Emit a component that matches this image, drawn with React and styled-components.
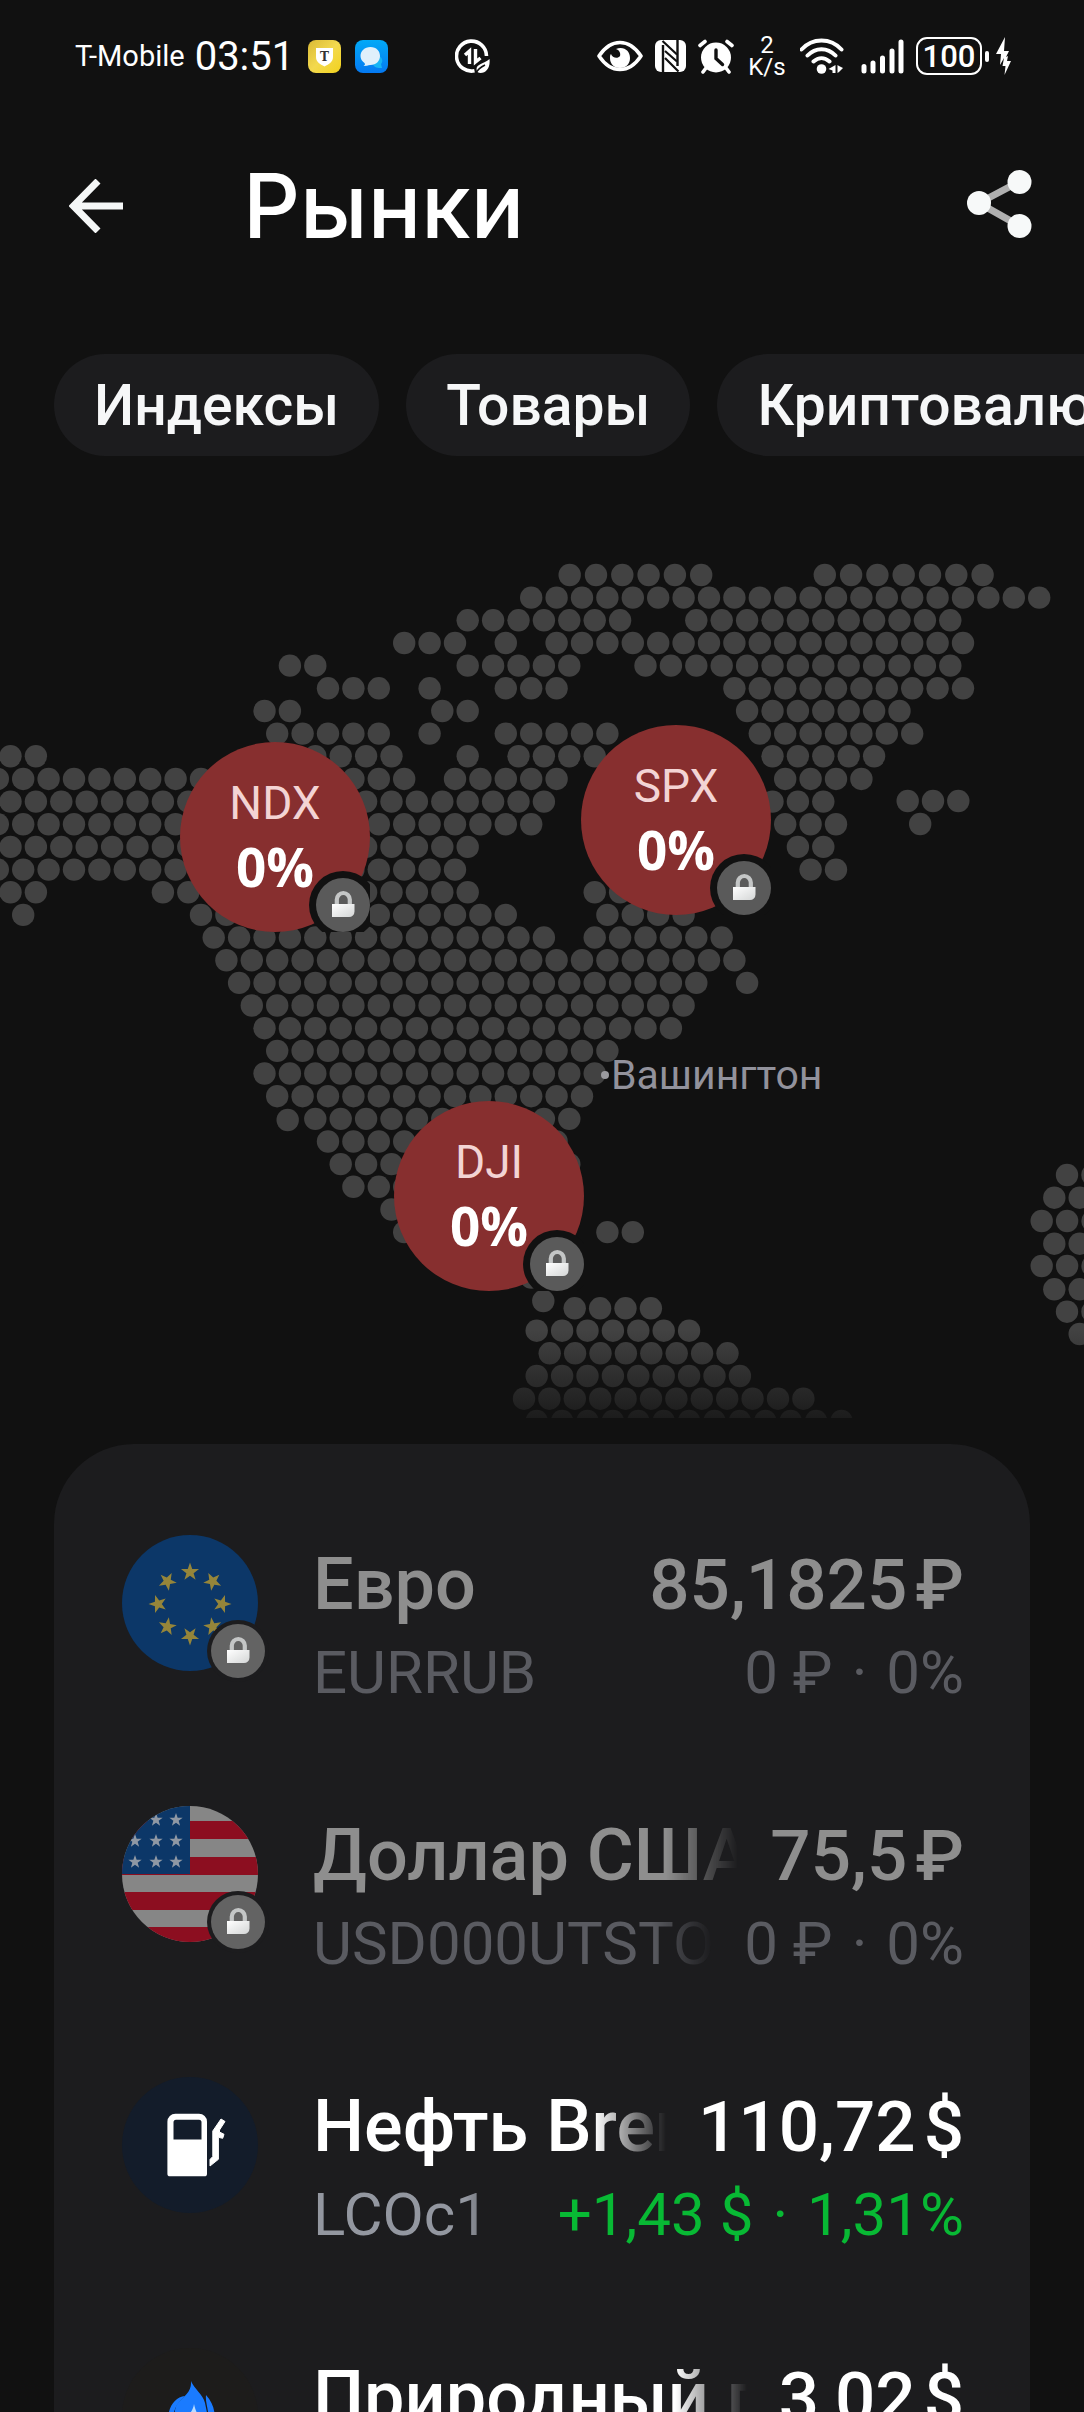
import React from 'react';
import styled, { createGlobalStyle } from 'styled-components';

const BG = '#111111';
const CARD = '#1c1c1e';

const MAP_W = 1084;
const MAP_TOP = 456;
const MAP_H = 962;

// Dot grid of the map: [row, first column, last column], columns step by 2
const RUNS = [
  [1, 40, 80],
  [2, 35, 47], [2, 53, 73],
  [3, 30, 34], [3, 38, 38], [3, 42, 74],
  [4, 21, 23], [4, 35, 43], [4, 49, 73],
  [5, 24, 28], [5, 32, 32], [5, 38, 42], [5, 56, 74],
  [6, 19, 21], [6, 33, 35], [6, 57, 69],
  [7, 20, 28], [7, 32, 32], [7, 38, 46], [7, 58, 70],
  [8, -1, 1], [8, 21, 29], [8, 35, 35], [8, 39, 45], [8, 59, 67],
  [9, -2, 30], [9, 34, 42], [9, 60, 66],
  [10, -1, 41], [10, 59, 63],
  [11, -2, 40], [11, 60, 64],
  [12, -1, 35], [12, 61, 63],
  [13, -2, 34], [13, 62, 64],
  [14, -1, 1], [14, 11, 35], [14, 45, 47],
  [15, 0, 0], [15, 14, 38], [15, 46, 52],
  [16, 15, 41], [16, 45, 55],
  [17, 16, 56],
  [18, 17, 53], [18, 57, 57],
  [19, 18, 52],
  [20, 19, 51],
  [21, 20, 46],
  [22, 19, 45],
  [23, 20, 44],
  [24, 23, 43],
  [25, 24, 42],
  [26, 25, 43],
  [27, 26, 30],
  [28, 29, 31],
  [29, 30, 32], [29, 46, 48],
  [31, 40, 40],
];

// Rows that sit off the main grid: [x, y, count, step]
const LOOSE = [
  [569.7, 575, 6, 26.3], [824.8, 575, 7, 26.3],
  [907.7, 801, 3, 25.3], [920.2, 824, 1, 0],
  [287.7, 1120, 1, 0], [543.3, 1301, 1, 0],
  [574.7, 1308.3, 4, 25.4],
  [536.7, 1330.7, 7, 25.4],
  [549.7, 1353.3, 8, 25.4],
  [536.7, 1376, 9, 25.4],
  [524, 1398.7, 12, 25.4],
  [536.7, 1421, 13, 25.4],
  [1067, 1175, 2, 25.4],
  [1054.3, 1197.7, 2, 25.4],
  [1041.7, 1221, 3, 25.4],
  [1054.3, 1243.7, 2, 25.4],
  [1041.7, 1266, 3, 25.4],
  [1054.3, 1289.3, 2, 25.4],
  [1067, 1311.7, 2, 25.4],
  [1079.7, 1334, 1, 0],
];

const dots = [];
RUNS.forEach(([row, from, to]) => {
  for (let n = from; n <= to; n += 2) {
    dots.push([23.2 + n * 12.7, 575 + row * 22.66]);
  }
});
LOOSE.forEach(([x, y, count, step]) => {
  for (let i = 0; i < count; i += 1) dots.push([x + i * step, y]);
});

const chips = ['Индексы', 'Товары', 'Криптовалюты'];

const pins = [
  { id: 'NDX', change: '0%', x: 275, y: 837 },
  { id: 'SPX', change: '0%', x: 676, y: 820 },
  { id: 'DJI', change: '0%', x: 489, y: 1196 },
];

const quotes = [
  { name: 'Евро', ticker: 'EURRUB', price: '85,1825', currency: '₽', diff: '0 ₽', percent: '0%', icon: 'eu', locked: true },
  { name: 'Доллар США', ticker: 'USD000UTSTOM', price: '75,5', currency: '₽', diff: '0 ₽', percent: '0%', icon: 'us', locked: true },
  { name: 'Нефть Brent', ticker: 'LCOc1', price: '110,72', currency: '$', diff: '+1,43 $', percent: '1,31%', icon: 'fuel', up: true },
  { name: 'Природный газ', ticker: 'NGc1', price: '3,02', currency: '$', diff: '+0,01 $', percent: '0,33%', icon: 'gas', up: true },
];

const star = (cx, cy, r) => {
  const pts = [];
  for (let i = 0; i < 10; i += 1) {
    const a = (Math.PI / 5) * i - Math.PI / 2;
    const k = i % 2 ? r * 0.4 : r;
    pts.push(`${(cx + k * Math.cos(a)).toFixed(2)},${(cy + k * Math.sin(a)).toFixed(2)}`);
  }
  return pts.join(' ');
};

const EuFlag = () => (
  <svg width="136" height="136" viewBox="0 0 136 136" aria-hidden="true">
    <circle cx="68" cy="68" r="68" fill="#0c3768" />
    {[0, 1, 2, 3, 4, 5, 6, 7].map(i => {
      const a = (Math.PI / 4) * i;
      const cx = 68 + 32 * Math.sin(a);
      const cy = 69 - 32 * Math.cos(a);
      return <polygon key={i} points={star(cx, cy, 9.5)} fill="#95853a" transform={`rotate(${i * 45} ${cx} ${cy})`} />;
    })}
  </svg>
);

const UsFlag = () => (
  <svg width="136" height="136" viewBox="0 0 136 136" aria-hidden="true">
    <clipPath id="usRound"><circle cx="68" cy="68" r="68" /></clipPath>
    <g clipPath="url(#usRound)">
      <rect width="136" height="136" fill="#868686" />
      {[15, 51, 86, 121].map(y => <rect key={y} y={y} width="136" height="18" fill="#8c0e20" />)}
      <rect width="68" height="68" fill="#0c3768" />
      {[[34, 14], [54, 14], [13, 35], [34, 35], [54, 35], [13, 56], [34, 56], [54, 56]].map(([x, y]) => (
        <polygon key={`${x}-${y}`} points={star(x, y, 7)} fill="#8f98a4" />
      ))}
    </g>
  </svg>
);

const FuelIcon = () => (
  <svg width="136" height="136" viewBox="0 0 136 136" aria-hidden="true">
    <circle cx="68" cy="68" r="68" fill="#131c2a" />
    <path fill="#fff" fillRule="evenodd" d="M53.500 36.700h23.500a8 8 0 0 1 8 8v52a2.600 2.600 0 0 1-2.600 2.600H48a2.600 2.600 0 0 1-2.600-2.600v-52a8 8 0 0 1 8.100-8zM54 42.700a2.500 2.500 0 0 0-2.500 2.500v17.200h28V45.200a2.500 2.500 0 0 0-2.500-2.500z" />
    <path fill="#fff" stroke="#fff" strokeWidth="1" strokeLinejoin="round" d="M88 89v-6.500l2.800-3V54L99 42l4 2.500-5.500 8.500 0 2 4.500 2.300-1.300 4-4.300-1v22z" />
  </svg>
);

const GasIcon = () => (
  <svg width="136" height="136" viewBox="0 0 136 136" aria-hidden="true">
    <circle cx="68" cy="68" r="68" fill="#1d1c1b" />
    <path fill="#1a7bff" d="M69 33c1 11-7 15-13 22-5 6-4 18 0 30h28c4-11 1-20-1-30-2-9-11-14-14-22z" />
    <path fill="#1a7bff" d="M63 48c-10 1-17 11-17 24 0 6 2 10 5 14-2-14-1-27 12-38zM84 47c-1 9 4 15 3 38 8-10 8-26-3-38z" />
    <path fill="#b9dcff" d="M72 56c-1 9-9 12-9 24h16c0-10-5-14-7-24z" />
  </svg>
);

const ICONS = { eu: EuFlag, us: UsFlag, fuel: FuelIcon, gas: GasIcon };

const LockIcon = () => (
  <svg width="54" height="54" viewBox="0 0 54 54" aria-hidden="true">
    <defs>
      <linearGradient id="lockBody" x1="0" y1="0" x2="1" y2="1">
        <stop offset="0" stopColor="#ffffff" />
        <stop offset="1" stopColor="#d4d6d6" />
      </linearGradient>
    </defs>
    <path d="M20.800 27v-5.500a6.500 6.500 0 0 1 13 0V27" fill="none" stroke="#c4c6c6" strokeWidth="4.200" />
    <path d="M16 26h22.500v7.500a5.500 5.500 0 0 1-5.500 5.500H16z" fill="url(#lockBody)" />
  </svg>
);

const StatusBar = () => (
  <Status>
    <Carrier>T-Mobile</Carrier>
    <Clock>03:51</Clock>
    <AppIcons>
      <svg width="33" height="33" viewBox="0 0 33 33">
        <defs>
          <linearGradient id="bank" x1="0" y1="0" x2="1" y2="1">
            <stop offset="0" stopColor="#d9b936" />
            <stop offset=".5" stopColor="#f3d94e" />
            <stop offset="1" stopColor="#f2d21c" />
          </linearGradient>
          <linearGradient id="chat" x1="0" y1="0" x2="0" y2="1">
            <stop offset="0" stopColor="#02a9f7" />
            <stop offset="1" stopColor="#0479f2" />
          </linearGradient>
        </defs>
        <rect width="33" height="33" rx="8" fill="url(#bank)" />
        <path d="M8 8h17v9c0 5-4 7-8.500 9.500C12 24 8 22 8 17z" fill="#fff" />
        <text x="16.500" y="21" textAnchor="middle" fontFamily="DejaVu Serif, serif" fontWeight="700" fontSize="12" fill="#333">T</text>
      </svg>
      <svg width="33" height="33" viewBox="0 0 33 33">
        <rect width="33" height="33" rx="8" fill="url(#chat)" />
        <path d="M24 16c4 2 4 6 2 8l1 4c-4 0-8 0-9-4z" fill="#16b5f5" />
        <path d="M15.500 7C21.500 7 25 11 25 16s-4 9-9.500 9c-2 0-3 1-7 1 2-1 1.500-2 1-3C7 21 5.500 19 5.500 16c0-5 4-9 10-9z" fill="#dff0fb" />
      </svg>
    </AppIcons>
    <svg width="35" height="35" viewBox="0 0 35 35" fill="none" stroke="#fff">
      <path d="M19.500 31.800A15 15 0 1 1 31.500 17" strokeWidth="3.600" />
      <path d="M14.500 25V12l-4.500 4M20.500 10v13l5-4" strokeWidth="3.400" />
      <path d="M34.500 20c1 8-3 14-9 14-2 0-4-1-4-4 0-5 7-5 13-10z" fill="#fff" stroke="none" />
      <path d="M21 34c2-4 5-6 9-8" stroke={BG} strokeWidth="1.500" />
    </svg>
    <Indicators>
      <svg width="46" height="34" viewBox="0 0 46 34">
        <path d="M2 17C8 8 15 3.500 23 3.500S38 8 44 17c-6 9-13 13.500-21 13.500S8 26 2 17z" fill="none" stroke="#fff" strokeWidth="3.600" strokeLinejoin="round" />
        <path d="M19 10c8-3 14 2 14 9 0 6-4 10-10 10s-10-4-10-10c0-2 0-3 1-4 1 4 7 5 9 2 1-3-1-6-4-7z" fill="#fff" />
      </svg>
      <svg width="31" height="34" viewBox="0 0 31 34">
        <path d="M6 1h19a6 6 0 0 1 6 6v20a6 6 0 0 1-6 6H6a6 6 0 0 1-6-6V7a6 6 0 0 1 6-6z" fill="#fff" />
        <path d="M8 6v27M22.500 1v26" stroke={BG} strokeWidth="2.400" />
        <path d="M7.500 2L22 15.500M10 12l12 10.500M10 19l13.500 13.500" stroke={BG} strokeWidth="2.200" />
      </svg>
      <svg width="36" height="35" viewBox="0 0 36 35" fill="none" stroke="#fff" strokeLinecap="round">
        <circle cx="18" cy="18.500" r="15" fill="#fff" stroke="none" />
        <path d="M2 6.500l5-4M34 6.500l-5-4M8 29l-3 4M28 29l3 4" strokeWidth="3.600" />
        <path d="M18 11v8.500l6.500 6" stroke={BG} strokeWidth="3.400" />
      </svg>
      <Speed>
        <span>2</span>
        <span>K/s</span>
      </Speed>
      <svg width="49" height="38" viewBox="0 0 49 38" fill="none" stroke="#fff" strokeWidth="4" strokeLinecap="round">
        <path d="M1.500 12.500C12.500 .5 30.500 .5 41.500 12.500M7.500 18.500c8-8.500 20-8.500 28 0M13.500 24.500c5-4.500 11-4.500 16 0" />
        <circle cx="21.500" cy="32" r="4.800" fill="#fff" stroke="none" />
        <path d="M35.500 28v8h-3v-2.500l-4-1.500zM37.500 36v-8l1.500 1 4 2-4 4z" fill="#fff" stroke="none" />
      </svg>
      <svg width="43" height="35" viewBox="0 0 43 35" stroke="#fff" strokeWidth="5" strokeLinecap="round">
        <path d="M3 27.500V32M12 24v8M21.500 19v13M31 12v20M40 3v29" />
      </svg>
      <Power>
        <Battery>100</Battery>
        <Nub />
        <svg width="16" height="38" viewBox="0 0 16 38">
          <path d="M9 0L0 17h5l-1 11 4-7-1.500 8h3l-1 9 6.500-14h-4l1-5-2 1 3-6H8z" fill="#fff" />
        </svg>
      </Power>
    </Indicators>
  </Status>
);

const Quote = ({ quote }) => {
  const Icon = ICONS[quote.icon];
  return (
    <Row>
      <IconBox>
        <Icon />
        {quote.locked && <RowBadge><LockIcon /></RowBadge>}
      </IconBox>
      <Lines>
        <Line>
          <Name $dim={quote.locked}>{quote.name}</Name>
          <Price $dim={quote.locked}>
            <span>{quote.price}</span>
            <span>{quote.currency}</span>
          </Price>
        </Line>
        <Line>
          <Ticker $dim={quote.locked}>{quote.ticker}</Ticker>
          <Change $dim={quote.locked} $up={quote.up}>
            <span>{quote.diff}</span>
            <span>·</span>
            <span>{quote.percent}</span>
          </Change>
        </Line>
      </Lines>
    </Row>
  );
};

export default function App() {
  return (
    <>
      <GlobalStyle />
      <Page>
        <StatusBar />

        <AppBar>
          <IconButton type="button" aria-label="Назад">
            <svg width="54" height="54" viewBox="0 0 54 54" fill="none" stroke="#f5f7f7" strokeWidth="7">
              <path d="M54 27H5M29 2L4.500 27 29 52" />
            </svg>
          </IconButton>
          <Title>Рынки</Title>
          <IconButton type="button" aria-label="Поделиться">
            <svg width="66" height="74" viewBox="0 0 66 74">
              <path d="M53.500 12.500L13 34l40.500 23" fill="none" stroke="#b0b0b0" strokeWidth="7" />
              <g fill="#f7f9f9">
                <circle cx="13" cy="34" r="12" />
                <circle cx="53.500" cy="13" r="12" />
                <circle cx="53.500" cy="57" r="12" />
              </g>
            </svg>
          </IconButton>
        </AppBar>

        <Chips>
          {chips.map(chip => <Chip type="button" key={chip}>{chip}</Chip>)}
        </Chips>

        <MapArea>
          <MapSvg viewBox={`0 ${MAP_TOP} ${MAP_W} ${MAP_H}`} aria-hidden="true">
            <defs>
              <linearGradient id="fade" x1="0" y1="0" x2="0" y2="1">
                <stop offset="0" stopColor={BG} stopOpacity="0" />
                <stop offset="1" stopColor={BG} stopOpacity=".8" />
              </linearGradient>
            </defs>
            <g fill="#424242">
              {dots.map(([x, y]) => <circle key={`${x}-${y}`} cx={x} cy={y} r="11.200" />)}
            </g>
            <rect x="0" y="1330" width={MAP_W} height="90" fill="url(#fade)" />
          </MapSvg>
          <City $x={601} $y={1075}>Вашингтон</City>
          {pins.map(pin => (
            <Pin type="button" key={pin.id} $x={pin.x} $y={pin.y}>
              <PinName>{pin.id}</PinName>
              <PinValue>{pin.change}</PinValue>
              <PinBadge><LockIcon /></PinBadge>
            </Pin>
          ))}
        </MapArea>

        <Card>
          {quotes.map(quote => <Quote key={quote.ticker} quote={quote} />)}
        </Card>
      </Page>
    </>
  );
}

const GlobalStyle = createGlobalStyle`
  * {
    box-sizing: border-box;
  }

  body {
    margin: 0;
    background: ${BG};
    color: #ffffff;
    font-family: Roboto, Inter, sans-serif;
  }

  svg {
    display: block;
    flex-shrink: 0;
  }

  button {
    border: 0;
    padding: 0;
    color: inherit;
    font-family: inherit;
    background: none;
    cursor: pointer;
  }
`;

const Page = styled.div`
  display: flex;
  flex-direction: column;
  height: 100vh;
  overflow: hidden;
`;

const Status = styled.div`
  display: flex;
  align-items: center;
  flex-shrink: 0;
  height: 112px;
  padding: 0 72px 0 75px;
`;

const Carrier = styled.span`
  font-size: 29px;
`;

const Clock = styled.span`
  margin-left: 10px;
  font-size: 40px;
`;

const AppIcons = styled.div`
  display: flex;
  gap: 14px;
  margin: 0 67px 0 14px;
`;

const Indicators = styled.div`
  display: flex;
  align-items: center;
  gap: 12px;
  margin-left: auto;
`;

const Speed = styled.div`
  display: flex;
  flex-direction: column;
  align-items: center;
  width: 42px;
  font-size: 24px;
  line-height: 22px;
`;

const Power = styled.div`
  display: flex;
  align-items: center;
`;

const Battery = styled.div`
  display: flex;
  align-items: center;
  justify-content: center;
  width: 66px;
  height: 38px;
  border: 2px solid #ffffff;
  border-radius: 11px;
  font-size: 31px;
  font-weight: 500;
`;

const Nub = styled.span`
  width: 4px;
  height: 11px;
  margin: 0 7px 0 3px;
  border-radius: 2px;
  background: #ffffff;
`;

const AppBar = styled.header`
  display: flex;
  align-items: center;
  flex-shrink: 0;
  height: 188px;
  padding: 0 52px 0 69px;
`;

const IconButton = styled.button`
  flex-shrink: 0;
`;

const Title = styled.h1`
  flex: 1;
  margin: 0 0 0 120px;
  font-family: Inter, Roboto, sans-serif;
  font-size: 89px;
  font-weight: 500;
  line-height: 104px;
`;

const Chips = styled.nav`
  display: flex;
  flex-shrink: 0;
  gap: 27px;
  margin-top: 54px;
  padding: 0 54px;
  overflow-x: auto;
  scrollbar-width: none;
`;

const Chip = styled.button`
  flex-shrink: 0;
  height: 102px;
  padding: 0 40px;
  border-radius: 51px;
  background: ${CARD};
  color: #f6f7f8;
  font-size: 57px;
  font-weight: 500;
`;

const MapArea = styled.section`
  position: relative;
  flex-shrink: 0;
`;

const MapSvg = styled.svg`
  width: 100%;
  height: auto;
`;

const City = styled.span`
  position: absolute;
  left: ${({ $x }) => ($x / MAP_W) * 100}%;
  top: ${({ $y }) => (($y - MAP_TOP) / MAP_H) * 100}%;
  display: flex;
  align-items: center;
  gap: 2px;
  transform: translateY(-50%);
  color: #92929c;
  font-size: 41px;

  &::before {
    content: '';
    width: 8px;
    height: 8px;
    border-radius: 50%;
    background: #9a9a9e;
  }
`;

const Pin = styled.button`
  position: absolute;
  left: ${({ $x }) => ($x / MAP_W) * 100}%;
  top: ${({ $y }) => (($y - MAP_TOP) / MAP_H) * 100}%;
  display: flex;
  flex-direction: column;
  align-items: center;
  justify-content: center;
  width: 190px;
  height: 190px;
  padding-bottom: 6px;
  transform: translate(-50%, -50%);
  border-radius: 50%;
  background: #872f2f;
  clip-path: inset(0);
`;

const PinName = styled.span`
  color: #f3d4d4;
  font-size: 46px;
  line-height: 66px;
`;

const PinValue = styled.span`
  color: #ffffff;
  font-family: 'Open Sans', Roboto, sans-serif;
  font-size: 53px;
  font-weight: 700;
  line-height: 62px;
`;

const PinBadge = styled.span`
  position: absolute;
  right: 0;
  bottom: 0;
  border-radius: 50%;
  background: #5a5a5a;
  box-shadow: 0 0 0 7px ${BG};
`;

const Card = styled.main`
  flex: 1;
  min-height: 0;
  margin: 26px 54px 0;
  padding: 91px 66px 0 68px;
  border-radius: 80px 80px 0 0;
  background: ${CARD};
  overflow: hidden;
`;

const Row = styled.article`
  display: flex;
  gap: 55px;
  height: 271px;
`;

const IconBox = styled.div`
  position: relative;
  flex-shrink: 0;
  width: 136px;
  height: 136px;
`;

const RowBadge = styled.span`
  position: absolute;
  right: -7px;
  bottom: -7px;
  border-radius: 50%;
  background: #636363;
  box-shadow: 0 0 0 4px ${CARD};
`;

const Lines = styled.div`
  flex: 1;
  min-width: 0;
  padding-top: 6px;
`;

const Line = styled.div`
  display: flex;
  justify-content: space-between;
  gap: 32px;
  line-height: 88px;
`;

const Name = styled.span`
  flex: 1;
  min-width: 0;
  overflow: hidden;
  white-space: nowrap;
  color: ${({ $dim }) => ($dim ? '#8e8e8e' : '#ffffff')};
  font-size: 72px;
  font-weight: 500;
  mask-image: linear-gradient(to right, #000 calc(100% - 72px), transparent);
`;

const Price = styled.span`
  display: flex;
  flex-shrink: 0;
  gap: 8px;
  color: ${({ $dim }) => ($dim ? '#8e8e8e' : '#ffffff')};
  font-size: 71px;
  font-weight: 500;
`;

const Ticker = styled.span`
  flex: 1;
  min-width: 0;
  overflow: hidden;
  white-space: nowrap;
  color: ${({ $dim }) => ($dim ? '#5a5b61' : '#9397a0')};
  font-size: 60px;
  mask-image: linear-gradient(to right, #000 calc(100% - 60px), transparent);
`;

const Change = styled.span`
  display: flex;
  flex-shrink: 0;
  gap: 19px;
  color: ${({ $dim, $up }) => ($dim ? '#5a5b61' : $up ? '#08b934' : '#9397a0')};
  font-size: 60px;
`;
